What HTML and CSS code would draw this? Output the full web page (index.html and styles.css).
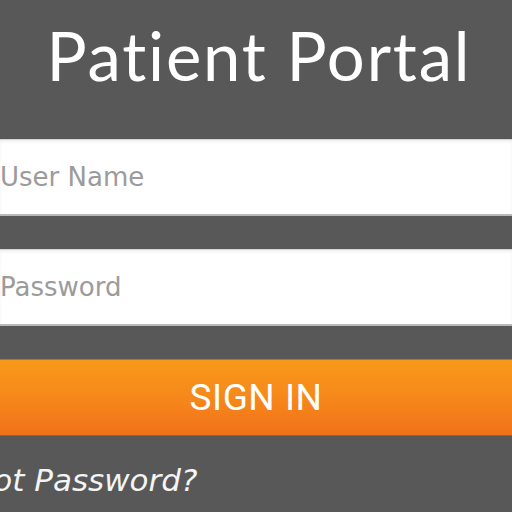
FILE: index.html
```html
<!DOCTYPE html>
<html>
<head>
<meta charset="utf-8">
<link rel="stylesheet" href="styles.css">
</head>
<body>
<main class="portal">
  <h1 class="title">Patient Portal</h1>
  <form class="login">
    <input class="field" type="text" placeholder="User Name">
    <input class="field" type="password" placeholder="Password">
    <button class="signin" type="button">SIGN IN</button>
  </form>
  <a class="forgot" href="#">Forgot Password?</a>
</main>
</body>
</html>
```

FILE: styles.css
```css
html, body {
  margin: 0;
  padding: 0;
  background: #585858;
  overflow: hidden;
}
.portal {
  display: flex;
  flex-direction: column;
  width: 512px;
  height: 512px;
}
.title {
  margin: 0;
  padding-top: 22px;
  height: 139px;
  box-sizing: border-box;
  font-family: Lato, "Open Sans", sans-serif;
  font-weight: 400;
  font-size: 67px;
  line-height: 67px;
  letter-spacing: 1.8px;
  color: #ffffff;
  text-align: center;
  padding-left: 6px;
}
.login {
  display: flex;
  flex-direction: column;
  gap: 33px;
}
.field {
  display: block;
  margin: 0;
  height: 77px;
  width: 100%;
  box-sizing: border-box;
  padding: 0;
  border: none;
  border-top: 1px solid #d4d4d4;
  border-bottom: 2px solid #b9b9b9;
  box-shadow: inset 0 2px 3px rgba(0,0,0,0.06);
  background: #ffffff;
  font-family: "DejaVu Sans", Verdana, sans-serif;
  font-size: 26px;
  color: #555;
  outline: none;
}
.field::placeholder {
  color: #9b9b9b;
}
.signin {
  display: block;
  margin: 0;
  height: 77px;
  width: 100%;
  border: none;
  border-top: 1px solid #b7742a;
  border-bottom: 1px solid #a85a20;
  background: linear-gradient(to bottom, #f8991a 0%, #f6881a 50%, #f2711a 100%);
  font-family: Roboto, "Liberation Sans", sans-serif;
  font-size: 37px;
  letter-spacing: 0.5px;
  color: #ffffff;
  padding: 0;
  cursor: pointer;
}
.forgot {
  display: block;
  margin-top: 27px;
  margin-left: -76px;
  font-family: "DejaVu Sans", Verdana, sans-serif;
  font-style: italic;
  font-size: 31px;
  line-height: 35px;
  color: #f4f4f4;
  text-decoration: none;
  white-space: nowrap;
}
```
